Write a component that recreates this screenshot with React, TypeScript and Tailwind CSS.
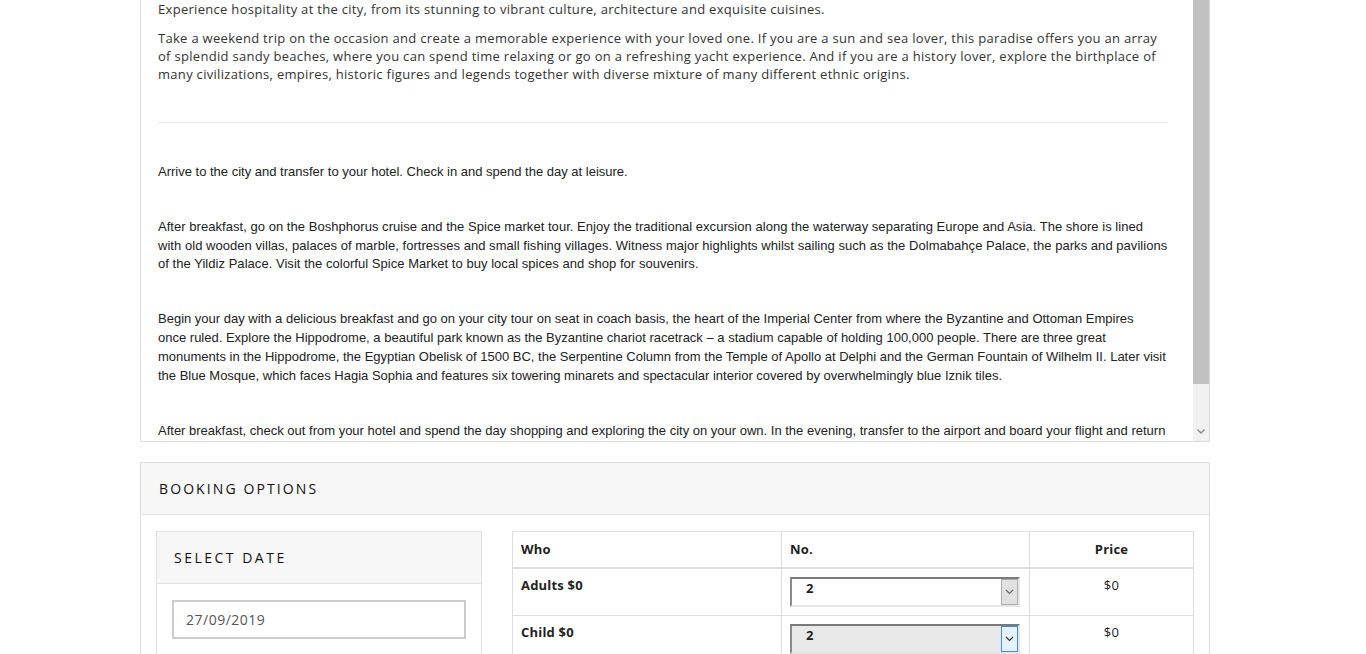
import React from "react";

const Chevron = ({ color = "#555" }: { color?: string }) => (
  <svg width="9" height="6" viewBox="0 0 9 6" fill="none">
    <path d="M1 1 L4.5 4.5 L8 1" stroke={color} strokeWidth="1.1" />
  </svg>
);

const SelectBox = ({ active }: { active?: boolean }) => (
  <div
    className={`relative h-[30px] w-[230px] border-2 border-t-[#7a7a7a] border-l-[#8a8a8a] border-r-[#e6e6e6] border-b-[#e6e6e6] ${
      active ? "bg-[#e9e9e9]" : "bg-white"
    }`}
  >
    <span className="absolute left-[14px] top-0 text-[13px] font-bold text-[#222]">2</span>
    <div
      className={`absolute right-0 top-0 flex h-[26px] w-[17px] items-center justify-center border ${
        active ? "border-[#3c8fdc] bg-[#e5f1fb]" : "border-[#adadad] bg-[#e1e1e1]"
      }`}
    >
      <Chevron color={active ? "#333" : "#666"} />
    </div>
  </div>
);

export default function App() {
  return (
    <div className="min-h-[654px] w-full bg-white" style={{ fontFamily: '"Open Sans", sans-serif' }}>
      <div className="ml-[140px] w-[1070px]">
        {/* Scrolled description box */}
        <div className="flex h-[442px] overflow-hidden border-x border-b border-[#dcdcdc]">
          <div className="w-[1052px] overflow-hidden pl-[17px] pr-[25px]">
            <p className="text-[13px] leading-[18px] tracking-[0.3px] text-[#333]">
              Experience hospitality at the city, from its stunning to vibrant culture, architecture and exquisite cuisines.
            </p>
            <p className="mt-[11px] text-[13px] leading-[18px] tracking-[0.3px] text-[#333]">
              Take a weekend trip on the occasion and create a memorable experience with your loved one. If you are a sun and sea lover, this paradise offers you an array of splendid sandy beaches, where you can spend time relaxing or go on a refreshing yacht experience. And if you are a history lover, explore the birthplace of many civilizations, empires, historic figures and legends together with diverse mixture of many different ethnic origins.
            </p>
            <div className="mt-[39px] h-px bg-[#e8e8e8]" />
            <div className="text-[13px] leading-[18.8px] text-[#222]" style={{ fontFamily: '"Liberation Sans", Arial, sans-serif' }}>
              <p className="mt-[40px]">Arrive to the city and transfer to your hotel. Check in and spend the day at leisure.</p>
              <p className="mt-[36px] tracking-[0.04px]">
                After breakfast, go on the Boshphorus cruise and the Spice market tour. Enjoy the traditional excursion along the waterway separating Europe and Asia. The shore is lined with old wooden villas, palaces of marble, fortresses and small fishing villages. Witness major highlights whilst sailing such as the Dolmabahçe Palace, the parks and pavilions of the Yildiz Palace. Visit the colorful Spice Market to buy local spices and shop for souvenirs.
              </p>
              <p className="mt-[36px]">
                Begin your day with a delicious breakfast and go on your city tour on seat in coach basis, the heart of the Imperial Center from where the Byzantine and Ottoman Empires
                <br />
                once ruled. Explore the Hippodrome, a beautiful park known as the Byzantine chariot racetrack – a stadium capable of holding 100,000 people. There are three great monuments in the Hippodrome, the Egyptian Obelisk of 1500 BC, the Serpentine Column from the Temple of Apollo at Delphi and the German Fountain of Wilhelm II. Later visit the Blue Mosque, which faces Hagia Sophia and features six towering minarets and spectacular interior covered by overwhelmingly blue Iznik tiles.
              </p>
              <p className="mt-[37px]">
                After breakfast, check out from your hotel and spend the day shopping and exploring the city on your own. In the evening, transfer to the airport and board your flight and return home with wonderful memories of your trip.
              </p>
            </div>
          </div>
          {/* scrollbar */}
          <div className="flex w-[16px] flex-col bg-[#f1f1f1]">
            <div className="h-[384px] bg-[#c1c1c1]" />
            <div className="flex-1" />
            <div className="flex h-[17px] items-center justify-center pb-[2px]">
              <svg width="8" height="5" viewBox="0 0 8 5" fill="none">
                <path d="M0.5 0.5 L4 4 L7.5 0.5" stroke="#8a8a8a" strokeWidth="1.4" />
              </svg>
            </div>
          </div>
        </div>

        {/* Booking options */}
        <div className="mt-[20px] border border-[#dcdcdc]">
          <div className="flex h-[52px] items-center border-b border-[#e3e3e3] bg-[#f7f7f7] pl-[18px]">
            <h3 className="text-[14px] tracking-[2.1px] text-[#111]">BOOKING OPTIONS</h3>
          </div>
          <div className="flex gap-[30px] px-[15px] pt-[16px] pb-[20px]">
            <div className="w-[326px] border border-[#e0e0e0]">
              <div className="flex h-[52px] items-center border-b border-[#e3e3e3] bg-[#f7f7f7] pl-[17px]">
                <h4 className="text-[14px] tracking-[2.5px] text-[#111]">SELECT DATE</h4>
              </div>
              <div className="px-[15px] pt-[16px] pb-[15px]">
                <div className="flex h-[39px] items-center border-2 border-[#cccccc] pl-[12px] text-[14px] tracking-[0.5px] text-[#555]">
                  27/09/2019
                </div>
              </div>
            </div>
            <table className="h-fit w-[682px] border-collapse border border-[#dddddd] text-[13px] tracking-[0.2px] text-[#222]">
              <thead>
                <tr className="h-[36px] border-b-2 border-[#dddddd]">
                  <th className="w-[269px] border border-[#dddddd] px-[8px] text-left font-bold">Who</th>
                  <th className="w-[248px] border border-[#dddddd] px-[8px] text-left font-bold">No.</th>
                  <th className="border border-[#dddddd] px-[8px] text-center font-bold">Price</th>
                </tr>
              </thead>
              <tbody>
                <tr className="h-[47px]">
                  <td className="border border-[#dddddd] px-[8px] pt-[7px] align-top font-bold">Adults $0</td>
                  <td className="border border-[#dddddd] px-[8px] pt-[8px] pb-[8px] align-top">
                    <SelectBox />
                  </td>
                  <td className="border border-[#dddddd] px-[8px] pt-[7px] text-center align-top">$0</td>
                </tr>
                <tr className="h-[47px]">
                  <td className="border border-[#dddddd] px-[8px] pt-[7px] align-top font-bold">Child $0</td>
                  <td className="border border-[#dddddd] px-[8px] pt-[8px] pb-[8px] align-top">
                    <SelectBox active />
                  </td>
                  <td className="border border-[#dddddd] px-[8px] pt-[7px] text-center align-top">$0</td>
                </tr>
              </tbody>
            </table>
          </div>
        </div>
      </div>
    </div>
  );
}
